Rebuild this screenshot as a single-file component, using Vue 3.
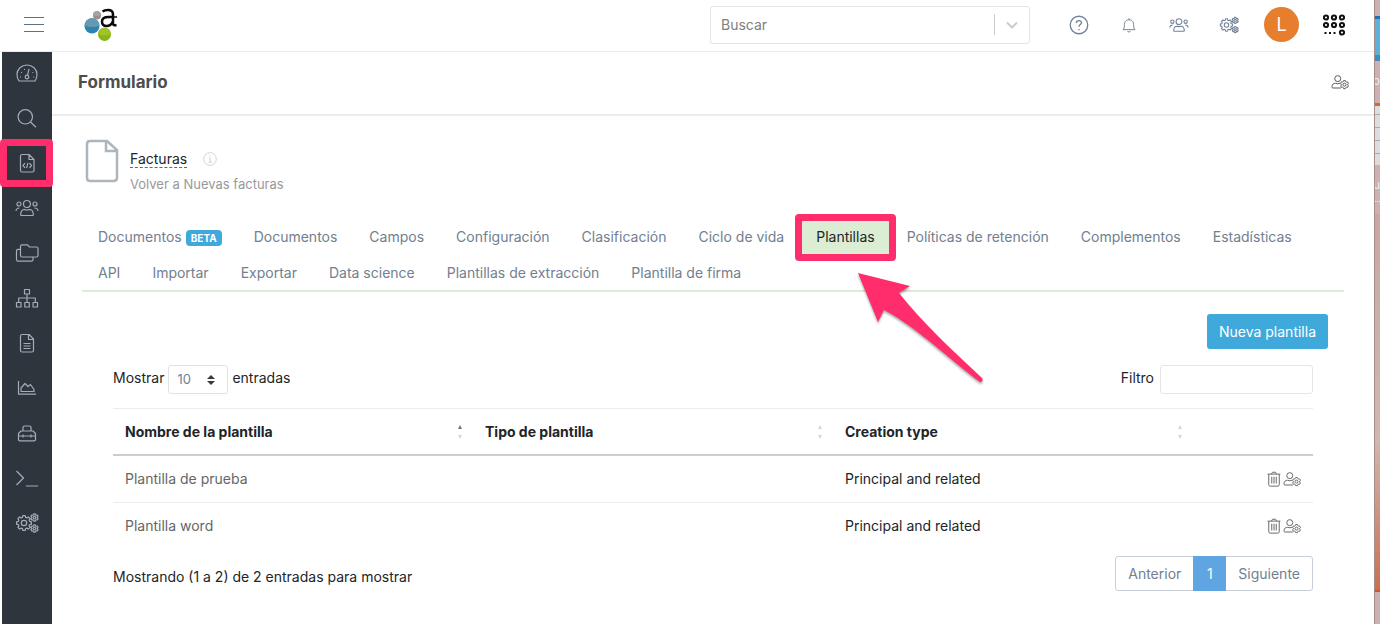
<script setup>
import { ref } from 'vue'

const circle = (x, y, r) => `M${x - r} ${y}a${r} ${r} 0 1 0 ${r * 2} 0a${r} ${r} 0 1 0 ${-r * 2} 0`

function gear(cx, cy, r, teeth) {
  const inner = r * 0.78
  const step = (Math.PI * 2) / teeth
  const points = []
  for (let i = 0; i < teeth; i++) {
    const pairs = [[-0.36, inner], [-0.2, r], [0.2, r], [0.36, inner]]
    pairs.forEach(([offset, radius]) => {
      const angle = (i + offset) * step - Math.PI / 2
      points.push(`${(cx + Math.cos(angle) * radius).toFixed(2)} ${(cy + Math.sin(angle) * radius).toFixed(2)}`)
    })
  }
  return `M${points.join('L')}Z${circle(cx, cy, r * 0.36)}`
}

const icons = {
  gauge: 'M4 20H20Q22 17 22 13.500A10 9.500 0 0 0 2 13.500Q2 17 4 20Z' + circle(12, 16, 1.8) + 'M12.500 14.200L14 8M5 16h1M6 11.500h1M9 8.500h1M17.300 11.500h1M18.200 16h1',
  search: circle(10.3, 10.8, 7.2) + 'M15.500 16L21 21.300',
  code: 'M7 3.500H14L19 8.500V19.500Q19 21 17.500 21H7Q5.500 21 5.500 19.500V5Q5.500 3.500 7 3.500ZM14 3.500V8.500H19M10 12.200L8 14.500L10 16.800M14.500 12.200L16.500 14.500L14.500 16.800M13 11.800L11.500 17.200',
  users: circle(12, 8, 3.5) + circle(4, 8, 2) + circle(20, 8, 2) + 'M6.500 19.500Q5.500 19.500 5.700 18C6 15 7.500 13.500 9.500 13.500Q12 14.500 14.500 13.500C16.500 13.500 18 15 18.300 18Q18.500 19.500 17.500 19.500ZM1 15Q1.200 12 4.500 12M23 15Q22.800 12 19.500 12',
  folders: 'M7.500 3.800H12.500L14.500 6H21.500Q23 6 23 7.500V14.500Q23 16 21.500 16H7Q5.500 16 5.500 14.500V5.300Q5.500 3.800 7 3.800ZM5.500 8.300H3Q1.500 8.300 1.500 9.800V18.700Q1.500 20.200 3 20.200H16.500Q18 20.200 18 18.700V16',
  sitemap: 'M9.500 3.500H14.500V8H9.500ZM1.500 16.500H6V21H1.500ZM9.800 16.500H14.300V21H9.800ZM18 16.500H22.500V21H18ZM12 8V16.500M3.700 16.500V12H20.300V16.500',
  file: 'M7 3.500H14L18.500 8V19.500Q18.500 21 17 21H7Q5.500 21 5.500 19.500V5Q5.500 3.500 7 3.500ZM13.500 3.500V8.500H18.500M8.500 12.500H15.500M8.500 15H15.500M8.500 17.500H15.500',
  chart: 'M3.500 5V18.200H21M6 15.500V12L10 7.500L13 10.500L15.500 8.500L19 13.500V15.500Z',
  toolbox: 'M8 10V6.500Q8 5 9.500 5H14.500Q16 5 16 6.500V10M6 10H18L20.500 12.500V18.500Q20.500 19.800 19.200 19.800H4.800Q3.500 19.800 3.500 18.500V12.500ZM3.500 15H20.500M8 13.500V16.500M16 13.500V16.500',
  terminal: 'M1.500 5L8.500 12L1.500 19M11 20H23',
  gears: gear(9, 12, 7.5, 8) + gear(19.5, 6.5, 3.7, 6) + gear(19.5, 17.5, 3.7, 6),
  help: circle(12, 12, 10.5) + 'M8.800 9.500C9 6 15 6 15 9.300C15 11.500 12 11.500 12 14M12 16.700v1.500',
  bell: 'M12 3V5M4 18.200C6.500 16 5.500 12 6.300 9C7 6.500 9 5 12 5C15 5 17 6.500 17.700 9C18.500 12 17.500 16 20 18.200ZM10 20.500Q12 22.300 14 20.500',
  userGear: circle(9, 7.5, 4) + 'M13 20H2.500Q1.200 20 1.300 18.200C1.500 15 3.500 13.700 6 13.700Q9 15 12 13.700' + gear(18, 15.5, 5.5, 6),
  trash: 'M3.500 5.500H20.500M8.500 5.500L10 3H14L15.500 5.500M5 5.500V19.500Q5 21.500 7 21.500H17Q19 21.500 19 19.500V5.500M9 9V18M12 9V18M15 9V18'
}

const menu = [
  { icon: 'gauge', label: 'Inicio' },
  { icon: 'search', label: 'Buscar' },
  { icon: 'code', label: 'Formularios', marked: true },
  { icon: 'users', label: 'Usuarios' },
  { icon: 'folders', label: 'Carpetas' },
  { icon: 'sitemap', label: 'Procesos' },
  { icon: 'file', label: 'Documentos' },
  { icon: 'chart', label: 'Informes' },
  { icon: 'toolbox', label: 'Herramientas' },
  { icon: 'terminal', label: 'Consola' },
  { icon: 'gears', label: 'Ajustes' }
]

const tools = [
  { icon: 'help', label: 'Ayuda' },
  { icon: 'bell', label: 'Avisos' },
  { icon: 'users', label: 'Usuarios' },
  { icon: 'gears', label: 'Ajustes' }
]

const tabs = [
  { name: 'Documentos', beta: true },
  { name: 'Documentos' },
  { name: 'Campos' },
  { name: 'Configuración' },
  { name: 'Clasificación' },
  { name: 'Ciclo de vida' },
  { name: 'Plantillas', active: true },
  { name: 'Políticas de retención' },
  { name: 'Complementos' },
  { name: 'Estadísticas' },
  { name: 'API' },
  { name: 'Importar' },
  { name: 'Exportar' },
  { name: 'Data science' },
  { name: 'Plantillas de extracción' },
  { name: 'Plantilla de firma' }
]

const columns = ['Nombre de la plantilla', 'Tipo de plantilla', 'Creation type']

const rows = [
  { name: 'Plantilla de prueba', type: '', creation: 'Principal and related' },
  { name: 'Plantilla word', type: '', creation: 'Principal and related' }
]

const search = ref('')
const filter = ref('')
const pageSize = ref('10')
</script>

<template>
  <div class="screen">
    <div class="window">
      <header class="topbar">
        <button class="burger" type="button" aria-label="Menú">
          <i></i><i></i><i></i>
        </button>
        <a class="logo" href="#" aria-label="Inicio">
          <svg viewBox="0 0 36 36">
            <circle cx="13" cy="8.500" r="4" fill="#9b908d" />
            <path d="M9 8a4 4 0 0 1 8 0q-4 2-8 0" fill="#aaa19f" />
            <circle cx="8" cy="19" r="7.500" fill="#2f84ad" />
            <path d="M0.500 18.500a7.500 7.500 0 0 1 15 0q-7 3-15 0" fill="#6499b4" />
            <circle cx="20.500" cy="27.500" r="6.500" fill="#86b51e" />
            <path d="M14 27a6.500 6.500 0 0 1 13 0q-6 3-13 0" fill="#a0c427" />
            <path d="M18.500 4.500Q20.500 3 24 3Q29 3 29 7.500V16.500Q29 19 32.500 18M28.500 10H24.500Q18 10 18 14.500Q18 19 22.500 19Q27 19 28.800 14.500" fill="none" stroke="#0b0b0b" stroke-width="2.500" />
            <path d="M28.500 10H33" stroke="#0b0b0b" stroke-width="1.500" />
          </svg>
        </a>
        <div class="search">
          <input v-model="search" type="text" placeholder="Buscar" aria-label="Buscar">
          <button type="button" aria-label="Abrir opciones">
            <svg viewBox="0 0 14 14"><path d="M2 4.500L7 9.500L12 4.500" /></svg>
          </button>
        </div>
        <nav class="tools">
          <button v-for="tool in tools" :key="tool.icon" type="button" :aria-label="tool.label">
            <svg :class="['icon', tool.icon]" viewBox="0 0 24 24"><path :d="icons[tool.icon]" /></svg>
          </button>
        </nav>
        <button class="avatar" type="button">L</button>
        <button class="apps" type="button" aria-label="Aplicaciones">
          <svg viewBox="0 0 22 22">
            <g fill="none" stroke="#111" stroke-width="2">
              <circle v-for="n in 6" :key="n" :cx="3 + ((n - 1) % 3) * 8" :cy="n > 3 ? 11 : 3.5" r="2.1" />
              <circle cx="19" cy="18.500" r="2.1" />
            </g>
            <path d="M1.500 18h2v2h-2zM6 18h2v2H6zM10.500 18h2v2h-2z" fill="#111" />
          </svg>
        </button>
      </header>

      <div class="body">
        <nav class="sidebar">
          <a v-for="item in menu" :key="item.icon" href="#" :class="{ marked: item.marked }" :aria-label="item.label">
            <svg class="icon" viewBox="0 0 24 24"><path :d="icons[item.icon]" /></svg>
          </a>
        </nav>

        <main>
          <div class="title">
            <h1>Formulario</h1>
            <button type="button" aria-label="Permisos">
              <svg class="icon" viewBox="0 0 24 24"><path :d="icons.userGear" /></svg>
            </button>
          </div>

          <section class="record">
            <svg class="sheet" viewBox="0 0 34 44">
              <path d="M5 2H22L32 11V38.500Q32 42 28.500 42H5Q2 42 2 39V5Q2 2 5 2ZM21 2V12H32" />
            </svg>
            <div>
              <div class="name">
                <a href="#">Facturas</a>
                <svg viewBox="0 0 14 14">
                  <circle cx="7" cy="7" r="6.300" />
                  <path d="M6 6H7.200V10M5.500 10.200H8.800M6.500 3.800H7.600" />
                </svg>
              </div>
              <a class="back" href="#">Volver a Nuevas facturas</a>
            </div>
          </section>

          <nav class="tabs">
            <a v-for="(tab, i) in tabs" :key="i" href="#" :class="{ active: tab.active }">
              {{ tab.name }}<span v-if="tab.beta" class="badge">BETA</span>
              <svg v-if="tab.active" class="arrow" viewBox="0 0 130 114">
                <path d="M0 0L52 13L41 20C65 50 95 78 124 105Q126 109 122 109C92 87 60 55 26 37L20 49Z" />
              </svg>
            </a>
          </nav>

          <div class="actions">
            <button type="button">Nueva plantilla</button>
          </div>

          <section class="list">
            <div class="controls">
              <label>
                Mostrar
                <span class="size">
                  <select v-model="pageSize">
                    <option>10</option>
                    <option>25</option>
                    <option>50</option>
                  </select>
                  <svg viewBox="0 0 8 10"><path d="M0 4L4 0L8 4ZM0 6L4 10L8 6Z" /></svg>
                </span>
                entradas
              </label>
              <label>
                Filtro
                <input v-model="filter" type="text">
              </label>
            </div>

            <table>
              <thead>
                <tr>
                  <th v-for="(column, i) in columns" :key="column" scope="col">
                    <button type="button">
                      {{ column }}
                      <svg :class="{ sorted: i === 0 }" viewBox="0 0 6 14">
                        <path class="up" d="M1 4L3 0L5 4Z" />
                        <path d="M1 10L3 14L5 10Z" />
                      </svg>
                    </button>
                  </th>
                  <th></th>
                </tr>
              </thead>
              <tbody>
                <tr v-for="row in rows" :key="row.name">
                  <td><a href="#">{{ row.name }}</a></td>
                  <td>{{ row.type }}</td>
                  <td>{{ row.creation }}</td>
                  <td>
                    <div class="row-actions">
                      <button type="button" aria-label="Eliminar">
                        <svg class="icon" viewBox="0 0 24 24"><path :d="icons.trash" /></svg>
                      </button>
                      <button type="button" aria-label="Permisos">
                        <svg class="icon" viewBox="0 0 24 24"><path :d="icons.userGear" /></svg>
                      </button>
                    </div>
                  </td>
                </tr>
              </tbody>
            </table>

            <footer>
              <p>Mostrando (1 a 2) de 2 entradas para mostrar</p>
              <div class="pager">
                <button type="button">Anterior</button>
                <button type="button" class="current">1</button>
                <button type="button">Siguiente</button>
              </div>
            </footer>
          </section>
        </main>
      </div>
    </div>

    <div class="desktop" aria-hidden="true">
      <div class="folder"></div>
      <div class="caption">o</div>
      <div class="shot"></div>
      <div class="caption">u</div>
      <div class="dots"></div>
      <div class="glow"></div>
    </div>
  </div>
</template>

<style>
body {
  margin: 0;
  background: #fff;
}
</style>

<style scoped>
.screen {
  display: flex;
  min-height: 100vh;
  font-family: Inter, "Liberation Sans", sans-serif;
  font-size: 14px;
  line-height: 20px;
  color: #212529;
}
.screen * {
  box-sizing: border-box;
}
button, input, select {
  font: inherit;
  color: inherit;
}
button {
  padding: 0;
  border: 0;
  background: none;
  cursor: pointer;
}
a {
  color: inherit;
  text-decoration: none;
}
svg {
  display: block;
}
.icon {
  width: 20px;
  height: 20px;
  fill: none;
  stroke: currentColor;
  stroke-width: 1.3;
  stroke-linejoin: round;
}
.window {
  flex: 1;
  min-width: 0;
  display: flex;
  flex-direction: column;
}

/* top bar */
.topbar {
  height: 52px;
  padding: 0 29px 2px 24px;
  display: flex;
  align-items: center;
  border-bottom: 1px solid #e9eaeb;
}
.burger {
  width: 20px;
  display: grid;
  gap: 6px;
}
.burger i {
  height: 1px;
  background: #5f7085;
}
.logo svg {
  width: 36px;
  height: 36px;
  margin-left: 40px;
}
.search {
  width: 320px;
  height: 38px;
  margin-left: auto;
  display: flex;
  align-items: center;
  border: 1px solid #e4e4e4;
  border-radius: 3px;
}
.search input {
  flex: 1;
  min-width: 0;
  padding: 0 10px;
  border: 0;
  outline: 0;
  background: none;
}
.search input::placeholder {
  color: #808080;
  opacity: 1;
}
.search button {
  width: 35px;
  height: 21px;
  border-left: 1px solid #ccc;
}
.search svg {
  width: 14px;
  height: 14px;
  margin: 0 auto;
  fill: none;
  stroke: #ccc;
  stroke-width: 2;
}
.tools {
  display: flex;
  margin: 0 10px 0 24px;
  color: #728297;
}
.tools button {
  width: 50px;
}
.tools .icon {
  margin: 0 auto;
}
.tools .help {
  stroke-width: 1.6;
}
.tools .bell {
  width: 18px;
  height: 18px;
}
.avatar {
  width: 35px;
  height: 35px;
  margin-right: 24px;
  border-radius: 50%;
  background: #e67e2e;
  color: #fff;
  font-size: 18px;
}
.apps svg {
  width: 22px;
  height: 22px;
}

/* side menu */
.body {
  flex: 1;
  display: flex;
}
.sidebar {
  width: 50px;
  margin-left: 2px;
  background: #2f353d;
  color: #a3acb7;
}
.sidebar a {
  height: 45px;
  padding-bottom: 3px;
  display: flex;
  align-items: center;
  justify-content: center;
  position: relative;
}
.sidebar .icon {
  width: 24px;
  height: 24px;
  stroke-width: 1.2;
}
.marked::after,
.active::after {
  content: '';
  position: absolute;
  border: 7px solid #ff2d6c;
  border-radius: 4px;
}
.marked::after {
  inset: -3px -1px 0 -2px;
}

main {
  flex: 1;
  min-width: 0;
}
.title {
  height: 64px;
  padding: 0 25px 2px 26px;
  display: flex;
  align-items: center;
  justify-content: space-between;
  border-bottom: 2px solid #ececec;
  color: #555;
}
.title .icon,
.row-actions .icon {
  width: 18px;
  height: 18px;
}
h1 {
  margin: 0;
  font-size: 17px;
  font-weight: 700;
  color: #4d4d4d;
}
.record {
  display: flex;
  gap: 11px;
  padding: 23px 33px 0;
}
.sheet {
  width: 34px;
  height: 44px;
  fill: none;
  stroke: #adb5bd;
  stroke-width: 2.5;
}
.name {
  display: flex;
  align-items: center;
  gap: 16px;
  height: 35px;
  padding-top: 4px;
}
.name a {
  line-height: 17px;
  border-bottom: 1px dashed #2a7ab0;
}
.name svg {
  width: 14px;
  height: 14px;
  fill: none;
  stroke: #d3d3d3;
}
.back {
  font-size: 13px;
  color: #999;
}

/* tabs */
.tabs {
  display: flex;
  flex-wrap: wrap;
  margin: 24px 30px 0;
  border-bottom: 2px solid #dbedd2;
  color: #728090;
}
.tabs a {
  position: relative;
  height: 36px;
  padding: 9px 16px 7px;
}
.badge {
  display: inline-block;
  margin-left: 4px;
  padding: 0 5px;
  border-radius: 4px;
  background: #40a9db;
  color: #fff;
  font-size: 10px;
  font-weight: 700;
  line-height: 16px;
}
.tabs .active {
  background: #dbedd2;
  color: #212529;
}
.active::after {
  inset: -4px -5px -7px;
}
.arrow {
  position: absolute;
  left: 58px;
  top: 55px;
  z-index: 1;
  width: 130px;
  height: 114px;
  fill: #ff2d6c;
  filter: drop-shadow(0 2px 1px #0005);
}

.actions {
  display: flex;
  justify-content: flex-end;
  padding: 22px 46px 16px;
}
.actions button {
  height: 35px;
  padding: 0 12px;
  border-radius: 3px;
  background: #40a9db;
  color: #fff;
}

/* template list */
.list {
  padding: 0 61px 24px;
}
.controls {
  display: flex;
  justify-content: space-between;
  padding-bottom: 14px;
}
.controls label {
  display: flex;
  gap: 4px;
  line-height: 26px;
}
.controls input {
  width: 153px;
  height: 29px;
  margin-left: 2px;
  border: 1px solid #e3e5e7;
  border-radius: 3px;
}
.size {
  display: grid;
  align-items: center;
}
.size select {
  grid-area: 1 / 1;
  width: 60px;
  height: 29px;
  padding: 0 8px 2px;
  border: 1px solid #e0e2e4;
  border-radius: 3px;
  appearance: none;
  background: none;
  color: #728090;
  font-size: 13px;
}
.size svg {
  grid-area: 1 / 1;
  justify-self: end;
  width: 8px;
  height: 10px;
  margin-right: 13px;
  fill: #343a40;
  pointer-events: none;
}
table {
  width: 100%;
  table-layout: fixed;
  border-collapse: separate;
  border-spacing: 0;
}
th, td {
  width: 30%;
  height: 46px;
  padding: 0 12px;
  border-top: 1px solid #ececec;
  text-align: left;
}
th {
  height: 48px;
  border-bottom: 2px solid #c8ced3;
}
th:last-child {
  width: 10%;
}
th button {
  width: 100%;
  display: flex;
  align-items: center;
  justify-content: space-between;
  font-weight: 700;
}
th svg {
  width: 6px;
  height: 14px;
  margin-right: -2px;
  fill: #d5d8da;
}
.sorted .up {
  fill: #6c757d;
}
tbody tr:first-child td {
  border-top: 0;
}
td a {
  color: #666;
}
.row-actions {
  display: flex;
  justify-content: flex-end;
  color: #666;
}
footer {
  display: flex;
  justify-content: space-between;
  padding-top: 8px;
}
footer p {
  margin: 11px 0 0;
}
.pager {
  display: flex;
  border: 1px solid #c8ced8;
  border-radius: 3px;
  color: #728090;
}
.pager button {
  height: 33px;
  padding: 0 12px;
}
.pager .current {
  width: 33px;
  height: 35px;
  margin: -1px 0;
  background: #5ea5e1;
  color: #fff;
}

/* strip of desktop beside the window */
.desktop {
  width: 6px;
  flex-shrink: 0;
  display: flex;
  flex-direction: column;
  overflow: hidden;
  border-left: 1px solid #a38e8c;
  background: #cdb0b2;
}
.folder {
  height: 45px;
  margin-top: 16px;
  border-top: 3px solid #2170b5;
  border-bottom: 6px solid #3c8fbd;
  background: #5bb1d7;
}
.caption {
  height: 42px;
  line-height: 40px;
  font-size: 12px;
  color: #eee;
  direction: rtl;
}
.shot {
  height: 62px;
  border-top: 3px solid #df622b;
  background: repeating-linear-gradient(#ddd 0 8px, #aaa 8px 9px, #d8dce5 9px 13px);
}
.dots {
  height: 1px;
  margin-bottom: 12px;
  border-top: 1px dotted #eee;
}
.shot + .caption {
  height: 36px;
}
.glow {
  flex: 1;
  max-height: 378px;
  border-bottom: 2px solid #cf5522;
  background: linear-gradient(#c8a7a2, #d0b8b0 60%, #c96f50);
}
</style>
